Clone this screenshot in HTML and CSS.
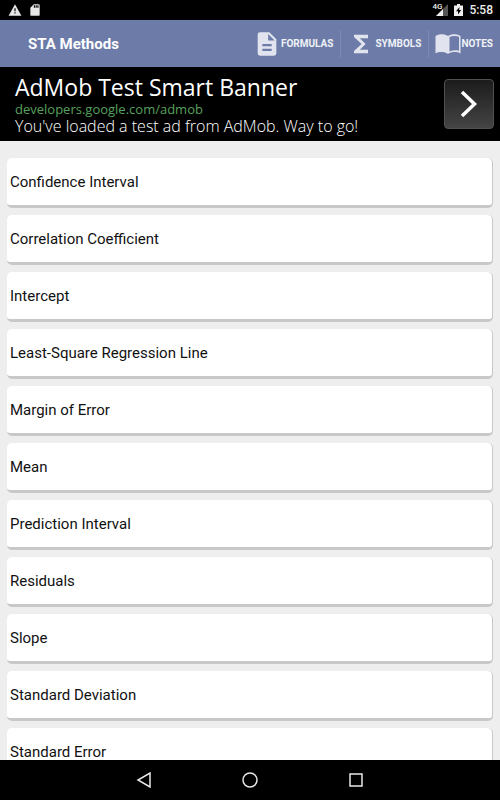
FILE: index.html
```html
<!DOCTYPE html>
<html lang="en">
<head>
<meta charset="utf-8">
<meta name="viewport" content="width=device-width, initial-scale=1">
<title>STA Methods</title>
<link rel="stylesheet" href="styles.css">
</head>
<body>
<div class="status">
  <svg width="14" height="14" viewBox="0 0 24 24" fill="#e6e6e6"><path d="M1 22h22L12 2zm12-4h-2v-2h2zm0-4h-2V9h2z"/></svg>
  <svg width="14" height="14" viewBox="0 0 24 24" fill="#e6e6e6"><path d="M18 2h-8L4 8v12a2 2 0 0 0 2 2h12a2 2 0 0 0 2-2V4a2 2 0 0 0-2-2zm-6 6h-2V4h2zm3 0h-2V4h2zm3 0h-2V4h2z"/></svg>
  <span class="signal">
    <span class="network">4G</span>
    <svg width="12" height="12" viewBox="0 0 12 12"><path d="M0 12 12 0V12z" fill="#555"/><path d="M0 12 7 5V12z" fill="#eee"/></svg>
  </span>
  <svg width="9" height="12" viewBox="0 0 9 12"><path d="M0 1.500h3V0h3v1.500H9V12H0z" fill="#eee"/><path d="M5.500 3 2 7.200H4V10.500L7.200 6H5.200z" fill="#000"/></svg>
  <span class="clock">5:58</span>
</div>
<header class="bar">
  <h1 class="title">STA Methods</h1>
  <nav class="actions">
    <button class="action"><svg width="28" height="28" viewBox="0 0 24 24" fill="#e1e4ee"><path d="M14 2H6a2 2 0 0 0-2 2v16a2 2 0 0 0 2 2h12a2 2 0 0 0 2-2V8zm2 16H8v-2h8zm0-4H8v-2h8zm-3-5V3.500L18.500 9z"/></svg>FORMULAS</button>
    <button class="action"><svg width="28" height="28" viewBox="0 0 24 24" fill="#e1e4ee"><path d="M18 4H6v2l6.500 6L6 18v2h12v-3h-7l5-5-5-5h7z"/></svg>SYMBOLS</button>
    <button class="action"><svg width="26" height="22" viewBox="0 0 26 22"><path d="M.5 3C4 .6 9.500.6 13 3 16.500.6 22 .6 25.500 3V20.500C22 18.500 16.500 18.500 13 21 9.500 18.500 4 18.500.5 20.500z" fill="#e1e4ee"/><path d="M14.500 4C17.500 2.700 21 2.700 24 3.800V17.800C21 17 17.500 17.200 14.500 18.500z" fill="#6c7ba8"/></svg>NOTES</button>
  </nav>
</header>
<aside class="ad">
  <div class="ad-copy">
    <strong class="ad-title">AdMob Test Smart Banner</strong>
    <a class="ad-link" href="#">developers.google.com/admob</a>
    <span class="ad-text">You've loaded a test ad from AdMob. Way to go!</span>
  </div>
  <button class="ad-go" aria-label="Open ad"><svg width="18" height="28" viewBox="0 0 18 28" fill="none" stroke="#fff" stroke-width="3.500"><path d="M2 2 14.500 14 2 26"/></svg></button>
</aside>
<main class="list">
  <button class="card">Confidence Interval</button>
  <button class="card">Correlation Coefficient</button>
  <button class="card">Intercept</button>
  <button class="card">Least-Square Regression Line</button>
  <button class="card">Margin of Error</button>
  <button class="card">Mean</button>
  <button class="card">Prediction Interval</button>
  <button class="card">Residuals</button>
  <button class="card">Slope</button>
  <button class="card">Standard Deviation</button>
  <button class="card">Standard Error</button>
</main>
<footer class="nav">
  <button class="key" aria-label="Back"><svg width="16" height="16" viewBox="0 0 16 16"><path d="M14 1V15L2 8z"/></svg></button>
  <button class="key" aria-label="Home"><svg width="16" height="16" viewBox="0 0 16 16"><circle cx="8" cy="8" r="7"/></svg></button>
  <button class="key" aria-label="Recent apps"><svg width="16" height="16" viewBox="0 0 16 16"><path d="M2 2H14V14H2z"/></svg></button>
</footer>
</body>
</html>
```
FILE: styles.css
```css
* {
  box-sizing: border-box;
}

body {
  margin: 0;
  height: 100vh;
  display: flex;
  flex-direction: column;
  background: #eee;
  color: #111;
  font-family: Roboto, "Liberation Sans", sans-serif;
}

button {
  border: 0;
  padding: 0;
  background: none;
  color: inherit;
  font: inherit;
}

svg {
  display: block;
  flex: none;
}

.status {
  flex: none;
  display: flex;
  align-items: center;
  gap: 6px;
  height: 20px;
  padding: 0 7px 0 8px;
  background: #000;
  color: #eee;
}

.signal {
  display: flex;
  align-items: center;
  margin-left: auto;
}

.network {
  align-self: flex-start;
  margin-right: -6px;
  font-size: 8px;
  line-height: 6px;
  font-weight: 500;
}

.clock {
  font-size: 12px;
  font-weight: 500;
}

.bar {
  flex: none;
  display: flex;
  align-items: center;
  justify-content: space-between;
  height: 47px;
  padding: 0 7px 0 28px;
  background: #6c7ba8;
  color: #fff;
}

.title {
  margin: 0;
  font-size: 15px;
  font-weight: 700;
}

.actions {
  display: flex;
}

.action {
  display: flex;
  align-items: center;
  height: 28px;
  font-size: 10px;
  font-weight: 700;
  color: #f0f2f7;
}

.action + .action {
  margin-left: 7px;
  padding-left: 6px;
  border-left: 1px solid #7c8ab3;
}

.ad {
  flex: none;
  display: flex;
  align-items: center;
  justify-content: space-between;
  height: 74px;
  padding: 0 6px 0 15px;
  background: #000;
  color: #fff;
  font-family: "Open Sans", "Noto Sans", sans-serif;
}

.ad-copy {
  display: flex;
  flex-direction: column;
}

.ad-title {
  font-size: 23px;
  line-height: 28px;
  font-weight: 400;
}

.ad-link {
  font-size: 13px;
  line-height: 16px;
  color: #57a05c;
  text-decoration: none;
}

.ad-text {
  font-size: 16px;
  line-height: 18px;
  font-weight: 300;
}

.ad-go {
  display: grid;
  place-items: center;
  width: 50px;
  height: 50px;
  border: 1px solid #505050;
  border-radius: 4px;
  background: linear-gradient(#1c1c1c, #444);
}

.list {
  flex: 1;
  min-height: 0;
  overflow: hidden;
  display: flex;
  flex-direction: column;
  gap: 7px;
  padding: 17px 7px 0;
}

.card {
  flex: none;
  height: 50px;
  padding: 0 3px;
  border: solid #c8c8c8;
  border-width: 0 1px 3px 0;
  border-radius: 5px;
  background: #fff;
  font-size: 15px;
  text-align: left;
}

.nav {
  flex: none;
  display: flex;
  justify-content: center;
  height: 40px;
  background: #000;
}

.key {
  display: grid;
  place-items: center;
  width: 106px;
}

.key svg {
  fill: none;
  stroke: #e8e8e8;
  stroke-width: 1.500px;
}
```
